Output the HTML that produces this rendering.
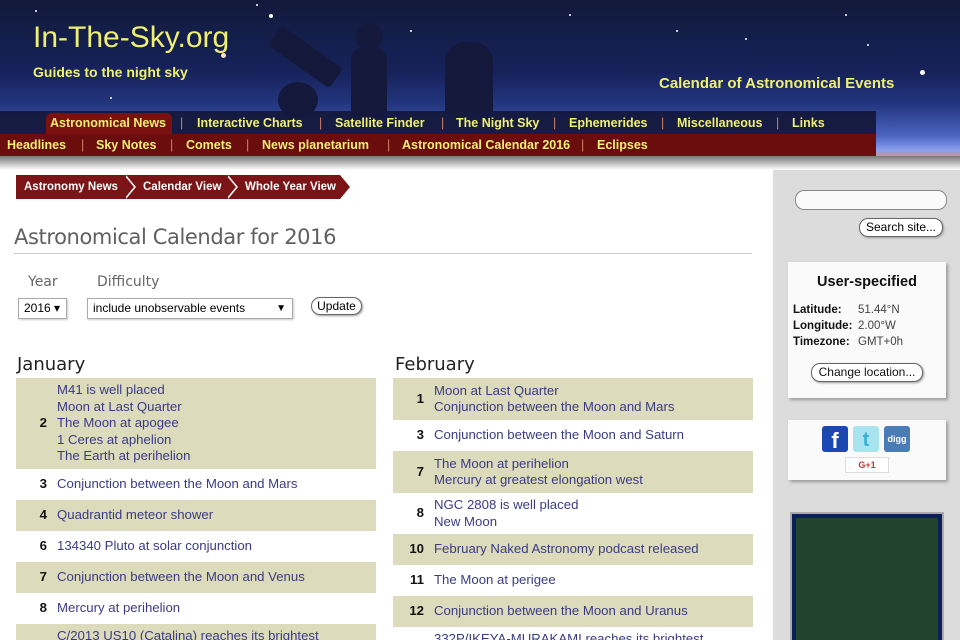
<!DOCTYPE html>
<html><head><meta charset="utf-8"><style>
*{margin:0;padding:0;box-sizing:border-box}
html,body{width:960px;height:640px;overflow:hidden}
body{font-family:"Liberation Sans",sans-serif;background:#fff;position:relative}
.hdr{position:absolute;left:0;top:0;width:960px;height:160px;background:linear-gradient(#111a3a 0%,#16225a 45%,#23357f 65%,#4a64c0 85%,#8aa0f0 94%,#f08a50 100%)}
.star{position:absolute;width:2px;height:2px;background:#fff;border-radius:50%}
.logo{position:absolute;left:33px;top:21px;color:#f0f070;font-size:30px;font-family:"Liberation Sans",sans-serif}
.tag{position:absolute;left:33px;top:64px;color:#f0f070;font-size:14px;font-weight:bold}
.cal{position:absolute;left:659px;top:75px;color:#f0f070;font-size:15px;font-weight:bold}
.sil{position:absolute;background:#14183a}
.nav1{position:absolute;left:0;top:111px;width:876px;height:23px;background:rgba(20,24,60,.95);font:bold 12.5px "Liberation Sans",sans-serif;color:#f0f070;white-space:nowrap}
.nav2{position:absolute;left:0;top:134px;width:876px;height:22px;background:#6b0d0d;font:bold 12.5px "Liberation Sans",sans-serif;color:#f0f070;white-space:nowrap}
.nav1 span{position:absolute;top:5px}
.nav2 span{position:absolute;top:4px}
.sep{color:#d08060;font-weight:normal}
.shadow{position:absolute;left:0;top:156px;width:960px;height:14px;background:linear-gradient(#777,#fff)}
.bc{position:absolute;top:175px;height:24px;background:#7a1416;color:#fff;font:bold 11.5px "Liberation Sans",sans-serif;line-height:24px;padding-left:8px;white-space:nowrap}
.bc:after{content:"";position:absolute;right:-10px;top:0;border-left:10px solid #7a1416;border-top:12px solid transparent;border-bottom:12px solid transparent}
.bc:before{content:"";position:absolute;right:-12px;top:0;border-left:10px solid #fff;border-top:12px solid transparent;border-bottom:12px solid transparent}
h1{position:absolute;left:14px;top:225px;font:normal 21px "DejaVu Sans",sans-serif;color:#606060;width:738px;border-bottom:1px solid #ccc;padding-bottom:4px;letter-spacing:-.4px}
.lbl{position:absolute;top:274px;font:14px "DejaVu Sans",sans-serif;color:#666}
.sel{position:absolute;top:298px;height:21px;border:1px solid #aaa;font-size:12px;line-height:19px;padding-left:5px;background:#fff;box-shadow:1px 1px 2px #ccc}
.btn{position:absolute;border:1px solid #666;border-radius:9px;font-size:12px;text-align:center;background:#fff;box-shadow:1px 1px 2px #999;white-space:nowrap}
.mon{position:absolute;top:354px;font:18px "DejaVu Sans",sans-serif;color:#222}
table{position:absolute;top:378px;width:360px;border-collapse:collapse;font:13.2px/16.5px "Liberation Sans",sans-serif}
td{vertical-align:middle}
td.d{width:41px;text-align:right;padding-right:10px;font-weight:bold;color:#111}
td.e{color:#3b3b85;padding:4px 0}
tr.s{background:#dcdbbb}
.side{position:absolute;left:773px;top:170px;width:187px;height:470px;background:#dcdcdc}
.box{position:absolute;background:#fafafa;box-shadow:2px 2px 3px #999}
</style></head><body>
<div class="hdr">
<div class="star" style="left:256px;top:4px"></div><div class="star" style="left:269px;top:14px;width:4px;height:4px"></div>
<div class="star" style="left:221px;top:53px;width:5px;height:5px;background:#fdc"></div><div class="star" style="left:300px;top:64px"></div>
<div class="star" style="left:569px;top:14px"></div><div class="star" style="left:745px;top:38px"></div><div class="star" style="left:867px;top:44px"></div>
<div class="star" style="left:920px;top:70px;width:5px;height:5px"></div><div class="star" style="left:35px;top:10px"></div><div class="star" style="left:110px;top:97px"></div>
<div class="star" style="left:676px;top:30px"></div><div class="star" style="left:845px;top:14px"></div><div class="star" style="left:410px;top:30px"></div>
<div class="sil" style="left:268px;top:45px;width:75px;height:24px;transform:rotate(35deg);border-radius:4px"></div>
<div class="sil" style="left:278px;top:82px;width:40px;height:36px;border-radius:50%"></div>
<div class="sil" style="left:356px;top:23px;width:26px;height:28px;border-radius:50%"></div>
<div class="sil" style="left:351px;top:48px;width:36px;height:70px;border-radius:12px 12px 0 0"></div>
<div class="sil" style="left:445px;top:42px;width:48px;height:70px;border-radius:20px 20px 0 0"></div>
<div class="logo">In-The-Sky.org</div>
<div class="tag">Guides to the night sky</div>
<div class="cal">Calendar of Astronomical Events</div>
</div>
<div class="nav1">
<div style="position:absolute;left:46px;top:2px;width:126px;height:21px;background:#7a1010;border-radius:6px 6px 0 0"></div>
<span style="left:50px">Astronomical News</span><span class="sep" style="left:180px">|</span>
<span style="left:197px">Interactive Charts</span><span class="sep" style="left:319px">|</span>
<span style="left:335px">Satellite Finder</span><span class="sep" style="left:441px">|</span>
<span style="left:456px">The Night Sky</span><span class="sep" style="left:553px">|</span>
<span style="left:569px">Ephemerides</span><span class="sep" style="left:661px">|</span>
<span style="left:677px">Miscellaneous</span><span class="sep" style="left:776px">|</span>
<span style="left:792px">Links</span>
</div>
<div class="nav2">
<span style="left:7px">Headlines</span><span class="sep" style="left:81px">|</span>
<span style="left:96px">Sky Notes</span><span class="sep" style="left:170px">|</span>
<span style="left:186px">Comets</span><span class="sep" style="left:246px">|</span>
<span style="left:262px">News planetarium</span><span class="sep" style="left:387px">|</span>
<span style="left:402px">Astronomical Calendar 2016</span><span class="sep" style="left:581px">|</span>
<span style="left:597px">Eclipses</span>
</div>
<div class="shadow"></div>
<div class="bc" style="left:16px;width:108px;z-index:3">Astronomy News</div>
<div class="bc" style="left:124px;width:102px;padding-left:19px;z-index:2">Calendar View</div>
<div class="bc" style="left:226px;width:114px;padding-left:19px;z-index:1">Whole Year View</div>
<h1>Astronomical Calendar for 2016</h1>
<div class="lbl" style="left:28px">Year</div><div class="lbl" style="left:97px">Difficulty</div>
<div class="sel" style="left:18px;width:49px">2016 ▾</div>
<div class="sel" style="left:87px;width:206px">include unobservable events<span style="position:absolute;right:6px;font-size:10px">▼</span></div>
<div class="btn" style="left:311px;top:297px;width:51px;height:18px;line-height:16px">Update</div>
<div class="mon" style="left:17px">January</div>
<div class="mon" style="left:395px">February</div>
<table style="left:16px">
<tr class="s" style="height:91px"><td class="d">2</td><td class="e">M41 is well placed<br>Moon at Last Quarter<br>The Moon at apogee<br>1 Ceres at aphelion<br>The Earth at perihelion</td></tr>
<tr style="height:31px"><td class="d">3</td><td class="e">Conjunction between the Moon and Mars</td></tr>
<tr class="s" style="height:31px"><td class="d">4</td><td class="e">Quadrantid meteor shower</td></tr>
<tr style="height:31px"><td class="d">6</td><td class="e">134340 Pluto at solar conjunction</td></tr>
<tr class="s" style="height:31px"><td class="d">7</td><td class="e">Conjunction between the Moon and Venus</td></tr>
<tr style="height:31px"><td class="d">8</td><td class="e">Mercury at perihelion</td></tr>
<tr class="s" style="height:31px"><td class="d"></td><td class="e" style="vertical-align:top">C/2013 US10 (Catalina) reaches its brightest</td></tr>
</table>
<table style="left:393px">
<tr class="s" style="height:42px"><td class="d">1</td><td class="e">Moon at Last Quarter<br>Conjunction between the Moon and Mars</td></tr>
<tr style="height:31px"><td class="d">3</td><td class="e">Conjunction between the Moon and Saturn</td></tr>
<tr class="s" style="height:42px"><td class="d">7</td><td class="e">The Moon at perihelion<br>Mercury at greatest elongation west</td></tr>
<tr style="height:41px"><td class="d">8</td><td class="e">NGC 2808 is well placed<br>New Moon</td></tr>
<tr class="s" style="height:31px"><td class="d">10</td><td class="e">February Naked Astronomy podcast released</td></tr>
<tr style="height:31px"><td class="d">11</td><td class="e">The Moon at perigee</td></tr>
<tr class="s" style="height:31px"><td class="d">12</td><td class="e">Conjunction between the Moon and Uranus</td></tr>
<tr style="height:31px"><td class="d"></td><td class="e" style="vertical-align:top">332P/IKEYA-MURAKAMI reaches its brightest</td></tr>
</table>
<div class="side">
<div style="position:absolute;left:22px;top:20px;width:152px;height:20px;border:1px solid #888;border-radius:9px;background:#fafafa"></div>
<div class="btn" style="left:86px;top:48px;width:84px;height:19px;line-height:17px">Search site...</div>
<div class="box" style="left:15px;top:92px;width:158px;height:136px;font:11.5px/16px 'Liberation Sans',sans-serif;color:#111">
<div style="text-align:center;font-weight:bold;font-size:14.5px;margin-top:12px">User-specified</div>
<div style="position:absolute;left:5px;top:40px;font-weight:bold">Latitude:<br>Longitude:<br>Timezone:</div>
<div style="position:absolute;left:70px;top:40px;color:#444">51.44°N<br>2.00°W<br>GMT+0h</div>
<div class="btn" style="left:23px;top:101px;width:112px;height:19px;line-height:17px;font-size:12px">Change location...</div>
</div>
<div class="box" style="left:15px;top:250px;width:158px;height:60px">
<div style="position:absolute;left:34px;top:6px;width:26px;height:26px;background:#1a48b0;border-radius:3px;color:#fff;font:bold 22px sans-serif;text-align:center;line-height:30px">f</div>
<div style="position:absolute;left:65px;top:6px;width:26px;height:26px;background:#a8e4f0;border-radius:3px;color:#3ab0d8;font:bold 20px sans-serif;text-align:center;line-height:28px">t</div>
<div style="position:absolute;left:96px;top:6px;width:26px;height:26px;background:#4a7cb8;border-radius:3px;color:#fff;font:bold 9px sans-serif;text-align:center;line-height:26px">digg</div>
<div style="position:absolute;left:57px;top:37px;width:44px;height:16px;border:1px solid #ddd;background:#fff;color:#c33;font:bold 9px sans-serif;text-align:center;line-height:14px">G+1</div>
</div>
<div style="position:absolute;left:17px;top:342px;width:154px;height:130px;border:2px solid #aaa;background:#0a1f5a">
<div style="position:absolute;left:4px;top:4px;right:4px;bottom:0;background:#22442e"></div>
</div>
</div>
</body></html>
